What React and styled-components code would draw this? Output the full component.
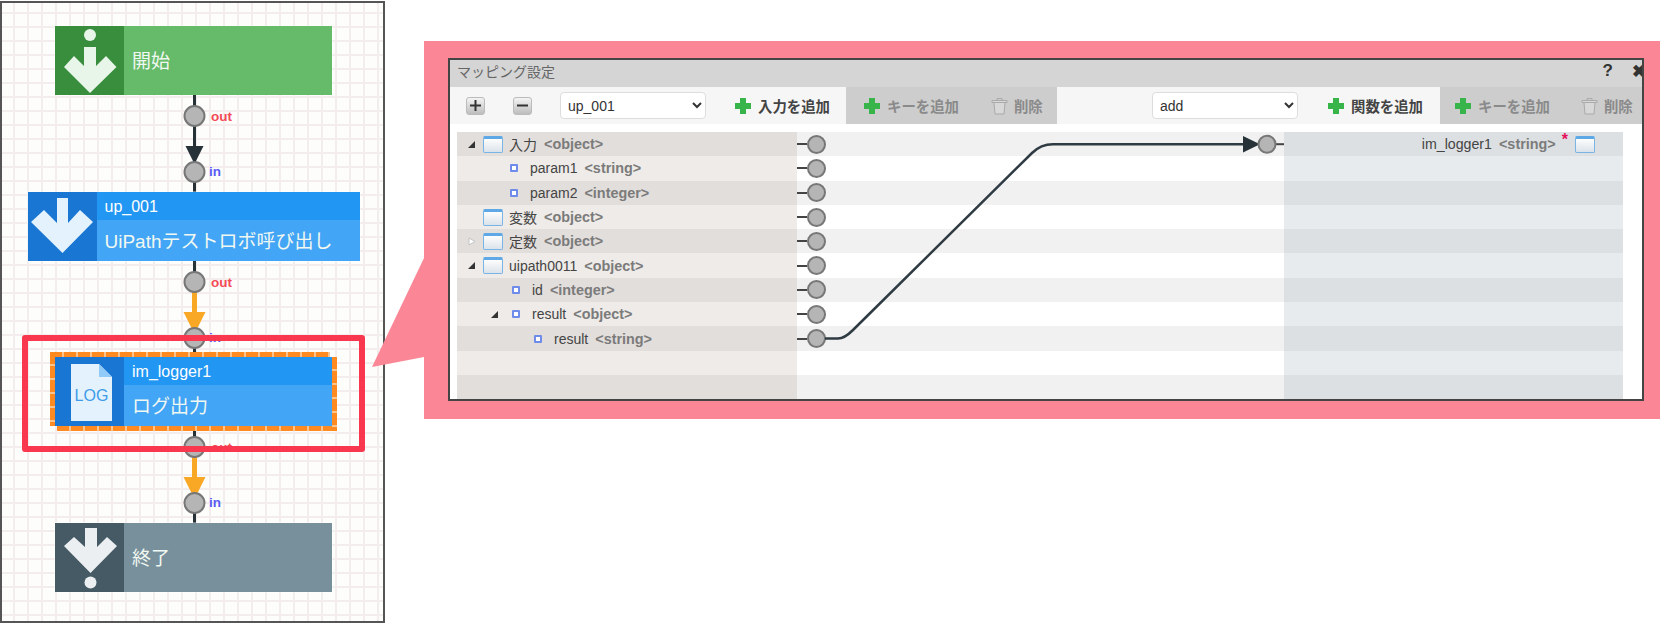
import React from 'react';
import styled, { createGlobalStyle, css } from 'styled-components';

const Global = createGlobalStyle`
    html, body { margin: 0; padding: 0; background: #fff; }
    * { box-sizing: border-box; }
    body { font-family: 'Liberation Sans', 'Noto Sans CJK JP', sans-serif; }
`;

// PAGE
const Page = styled.div`
    width: 1660px;
    height: 629px;
    display: flex;
    align-items: flex-start;
    overflow: hidden;
`;

// FLOW PANEL
const FlowPanel = styled.section`
    width: 385px;
    height: 622px;
    margin-top: 1px;
    padding: 23px 0 0 2px;
    flex: none;
    border: 2px solid #555;
    display: flex;
    flex-direction: column;
    align-items: center;
    background-color: #fdfdfc;
    background-image:
        linear-gradient(to right, #f3eded 2px, transparent 2px),
        linear-gradient(to bottom, #f3eded 2px, transparent 2px);
    background-size: 14px 14px;
    background-position: 11px 9px;
`;
const Node = styled.div`
    width: ${p => p.$width || 277}px;
    height: 69px;
    flex: none;
    display: flex;
    color: #fff;
    background: ${p => p.$body};
    box-shadow: 0 0 0 1px rgba(255, 255, 255, 0.35);
`;
const NodeIcon = styled.div`
    width: 69px;
    flex: none;
    background: ${p => p.$color};
    svg { display: block; }
`;
const NodeMain = styled.div`
    flex: 1;
    display: flex;
    flex-direction: column;
    justify-content: center;
`;
const NodeHead = styled.div`
    height: 28px;
    padding: 1px 0 0 8px;
    font-size: 16px;
    line-height: 27px;
    background: #2196f3;
`;
const NodeLabel = styled.div`
    flex: 1;
    display: flex;
    align-items: center;
    padding: 0 0 2px 8px;
    font-size: 19px;
    color: #f1f8f1;
`;
const Selected = styled.div`
    position: relative;
    flex: none;
`;
const Hatch = styled.span`
    position: absolute;
    ${p => (p.$side === 'top' || p.$side === 'bottom') && css`
        height: 5px;
        width: 280px;
        background: repeating-linear-gradient(to right, #ff8a22 0 12px, #ffc48c 12px 14px);
    `}
    ${p => (p.$side === 'left' || p.$side === 'right') && css`
        width: 5px;
        height: 74px;
        background: repeating-linear-gradient(to bottom, #ff8a22 0 12px, #ffc48c 12px 14px);
    `}
    ${p => p.$side === 'top' && 'left: -5px; top: -5px;'}
    ${p => p.$side === 'bottom' && 'left: 2px; top: 100%;'}
    ${p => p.$side === 'left' && 'left: -5px; top: -5px;'}
    ${p => p.$side === 'right' && 'left: 100%; top: 0;'}
`;
const RedFrame = styled.div`
    position: absolute;
    left: -33px;
    right: -33px;
    top: -22px;
    bottom: -26px;
    border: 6px solid #f9374f;
    border-radius: 3px;
`;
const LinkSvg = styled.svg`
    display: block;
    flex: none;
    font-family: 'Liberation Sans', sans-serif;
    font-size: 13.5px;
    font-weight: 700;
`;

// MAPPING DIALOG
const Callout = styled.section`
    position: relative;
    flex: 1;
    height: 378px;
    margin: 41px 0 0 39px;
    padding: 17px 16px 18px 24px;
    background: #fb8796;
`;
const CalloutTip = styled.svg`
    position: absolute;
    left: -52px;
    top: 1px;
`;
const Dialog = styled.div`
    height: 343px;
    border: 2px solid #444;
    background: #fff;
    display: flex;
    flex-direction: column;
    overflow: hidden;
`;
const TitleBar = styled.div`
    height: 27px;
    flex: none;
    padding: 0 0 5px 7px;
    display: flex;
    align-items: center;
    justify-content: space-between;
    background: #d5d5d5;
    color: #666;
    font-size: 14px;
`;
const TitleActions = styled.div`
    display: flex;
    align-items: center;
    gap: 19px;
    margin-right: -4px;
    color: #333;
    font-size: 17px;
    font-weight: 700;
`;
const Toolbar = styled.div`
    height: 38px;
    flex: none;
    display: flex;
    align-items: flex-start;
`;
const ToolGroup = styled.div`
    width: ${p => p.$width}px;
    height: 37px;
    padding-left: ${p => p.$pad}px;
    display: flex;
    align-items: center;
    gap: ${p => p.$gap}px;
    background: ${p => (p.$muted ? '#cdcdcd' : '#f6f6f6')};
`;
const TreeButton = styled.button`
    width: 19px;
    height: 18px;
    padding: 0;
    border: 1px solid #bbb;
    border-radius: 3px;
    display: flex;
    align-items: center;
    justify-content: center;
    background: linear-gradient(#f4f4f4, #bdbdbd);
`;
const Picker = styled.select`
    width: 146px;
    height: 27px;
    padding: 0 0 0 3px;
    border: 1px solid #ddd;
    border-radius: 4px;
    background: #fff;
    color: #333;
    font-family: 'Liberation Sans', sans-serif;
    font-size: 14px;
`;
const ToolItem = styled.div`
    display: flex;
    align-items: center;
    gap: 6px;
    font-size: 14.4px;
    font-weight: 700;
    color: ${p => (p.$muted ? '#8a8a8a' : '#444')};
`;
const Body = styled.div`
    position: relative;
    flex: 1;
    padding: 7px 19px 0 7px;
    display: grid;
    grid-auto-rows: 24.3px;
`;
const Row = styled.div`
    display: grid;
    grid-template-columns: 340px 487px 339px;
`;
const SourceCell = styled.div`
    display: flex;
    align-items: center;
    padding-left: ${p => p.$indent}px;
    background: ${p => (p.$even ? '#e2dedb' : '#eeebe8')};
    font-size: 14px;
    white-space: nowrap;
    color: #444;
`;
const MiddleCell = styled.div`
    display: flex;
    align-items: center;
    background: ${p => (p.$even ? '#f1f1f1' : '#fff')};
`;
const TargetCell = styled.div`
    display: flex;
    align-items: center;
    justify-content: flex-end;
    padding-right: 28px;
    background: ${p => (p.$even ? '#dde0e3' : '#e8ebee')};
    font-size: 14.2px;
    color: #444;
`;
const Twist = styled.svg`
    width: 8px;
    height: 9px;
    flex: none;
    margin-right: ${p => p.$after}px;
`;
const WindowIcon = styled.span`
    width: 20px;
    height: 17px;
    flex: none;
    border: 1px solid #78b4e6;
    border-top: 3px solid #5fa8e6;
    border-radius: 2px;
    background: linear-gradient(#fdfdfd, #dbe3ea);
`;
const Leaf = styled.span`
    width: 8px;
    height: 8px;
    flex: none;
    border: 2px solid #6f8cea;
    border-radius: 1px;
    background: #fff;
`;
const KeyName = styled.span`
    margin-left: ${p => p.$gap}px;
`;
const KeyType = styled.span`
    margin-left: 7px;
    color: #7b7b7b;
    font-size: 14.4px;
    font-weight: 700;
`;
const Required = styled.span`
    margin: -8px 7px 0 6px;
    color: #e5145a;
    font-size: 16px;
    font-weight: 700;
`;
const Stub = styled.span`
    width: 10px;
    height: 2px;
    flex: none;
    background: #444;
`;
const Port = styled.span`
    width: 19px;
    height: 19px;
    flex: none;
    border: 2px solid #777;
    border-radius: 50%;
    background: #b5b5b5;
`;
const Wires = styled.svg`
    position: absolute;
    left: 0;
    top: 0;
`;

const SOURCE_ROWS = [
    { indent: 11, twist: 'open', win: true, name: '入力', type: '<object>' },
    { indent: 53, name: 'param1', type: '<string>' },
    { indent: 53, name: 'param2', type: '<integer>' },
    { indent: 26, win: true, name: '変数', type: '<object>' },
    { indent: 11, twist: 'closed', win: true, name: '定数', type: '<object>' },
    { indent: 11, twist: 'open', win: true, name: 'uipath0011', type: '<object>' },
    { indent: 55, name: 'id', type: '<integer>' },
    { indent: 34, twist: 'open', name: 'result', type: '<object>' },
    { indent: 77, name: 'result', type: '<string>' },
    {},
    {},
];

const ARROWS = {
    start: 'M29 21H41V40L51 30L61.5 41L35 67L9 41L19 30L29 40Z',
    service: 'M29 6H40V31L52 18L65 30L34.5 61L3 30L16 18L29 31Z',
    end: 'M30 5H42V24L52 14L62 23L35.5 50L9 23L19 14L30 24Z',
};

const Twisty = ({ kind, after }) => (
    <Twist $after={after} viewBox="0 0 8 9">
        {kind === 'open'
            ? <path d="M0 8L7 1V8Z" fill="#333" />
            : <path d="M1 1L7 4.5L1 8Z" fill="#fff" stroke="#c4c4c4" />}
    </Twist>
);

const AddIcon = () => (
    <svg width="18" height="18" viewBox="0 0 18 18">
        <path d="M6 1H12V6H17V12H12V17H6V12H1V6H6Z" fill="#38b54a" />
    </svg>
);

const TrashIcon = () => (
    <svg width="17" height="18" viewBox="0 0 17 18" fill="#d8d8d8" stroke="#aaa">
        <path d="M1 3.5H16V5.5H1Z" />
        <path d="M6 3.5V1.5H11V3.5" fill="none" />
        <path d="M3 5.5H14L13 17H4Z" />
    </svg>
);

const FlowLink = ({ height, hot }) => (
    <LinkSvg width="381" height={height} viewBox={`0 0 381 ${height}`}>
        <path d={`M191.5 0V${height}`} stroke="#263238" strokeWidth="3" />
        {hot && <path d="M191.5 30V52" stroke="#f9a825" strokeWidth="5" />}
        {hot
            ? <path d="M180.5 51H202.5L191.5 73Z" fill="#f9a825" />
            : <path d="M182.5 51H200.5L191.5 69Z" fill="#263238" />}
        <circle cx="191.5" cy="21" r="10" fill="#b5b5b5" stroke="#777" strokeWidth="2" />
        <circle cx="191.5" cy="77" r="10" fill="#b5b5b5" stroke="#777" strokeWidth="2" />
        <text x="208" y="26" fill="#f44a55">out</text>
        <text x="206" y="81" fill="#5a5cf5">in</text>
    </LinkSvg>
);

const App = () => (
    <Page>
        <Global />
        <FlowPanel>
            <Node $body="#66bb6a">
                <NodeIcon $color="#388e3c">
                    <svg width="69" height="69" viewBox="0 0 69 69">
                        <circle cx="35" cy="9" r="6" fill="#e8f5e9" />
                        <path d={ARROWS.start} fill="#e8f5e9" />
                    </svg>
                </NodeIcon>
                <NodeMain><NodeLabel>開始</NodeLabel></NodeMain>
            </Node>
            <FlowLink height={97} />
            <Node $body="#42a5f5" $width={332}>
                <NodeIcon $color="#1976d2">
                    <svg width="69" height="69" viewBox="0 0 69 69">
                        <path d={ARROWS.service} fill="#e3f2fd" />
                    </svg>
                </NodeIcon>
                <NodeMain>
                    <NodeHead>up_001</NodeHead>
                    <NodeLabel>UiPathテストロボ呼び出し</NodeLabel>
                </NodeMain>
            </Node>
            <FlowLink height={96} hot />
            <Selected>
                <Hatch $side="top" />
                <Hatch $side="bottom" />
                <Hatch $side="left" />
                <Hatch $side="right" />
                <Node $body="#42a5f5">
                    <NodeIcon $color="#1976d2">
                        <svg width="69" height="69" viewBox="0 0 69 69">
                            <path d="M16 7H44L57 20V64H16Z" fill="#e3f2fd" />
                            <path d="M44 7L57 20H44Z" fill="#90caf9" />
                            <text x="36.5" y="44" textAnchor="middle" fontSize="16" fill="#3d9be9" fontFamily="Liberation Sans, sans-serif">LOG</text>
                        </svg>
                    </NodeIcon>
                    <NodeMain>
                        <NodeHead>im_logger1</NodeHead>
                        <NodeLabel>ログ出力</NodeLabel>
                    </NodeMain>
                </Node>
                <RedFrame />
            </Selected>
            <FlowLink height={97} hot />
            <Node $body="#78909c">
                <NodeIcon $color="#455a64">
                    <svg width="69" height="69" viewBox="0 0 69 69">
                        <path d={ARROWS.end} fill="#eceff1" />
                        <circle cx="35.5" cy="59.5" r="6" fill="#eceff1" />
                    </svg>
                </NodeIcon>
                <NodeMain><NodeLabel>終了</NodeLabel></NodeMain>
            </Node>
        </FlowPanel>

        <Callout>
            <CalloutTip width="52" height="377" viewBox="0 0 52 377">
                <path d="M52 216L0 325L52 315Z" fill="#fb8796" />
            </CalloutTip>
            <Dialog>
                <TitleBar>
                    マッピング設定
                    <TitleActions><span>?</span><span>✖</span></TitleActions>
                </TitleBar>
                <Toolbar>
                    <ToolGroup $width={396} $pad={16} $gap={28}>
                        <TreeButton aria-label="expand">
                            <svg width="11" height="11" viewBox="0 0 11 11"><path d="M4.5 0H6.5V4.5H11V6.5H6.5V11H4.5V6.5H0V4.5H4.5Z" fill="#333" /></svg>
                        </TreeButton>
                        <TreeButton aria-label="collapse">
                            <svg width="11" height="11" viewBox="0 0 11 11"><path d="M0 4.5H11V6.5H0Z" fill="#333" /></svg>
                        </TreeButton>
                        <Picker defaultValue="up_001"><option>up_001</option></Picker>
                        <ToolItem><AddIcon />入力を追加</ToolItem>
                    </ToolGroup>
                    <ToolGroup $width={211} $pad={17} $gap={32} $muted>
                        <ToolItem $muted><AddIcon />キーを追加</ToolItem>
                        <ToolItem $muted><TrashIcon />削除</ToolItem>
                    </ToolGroup>
                    <ToolGroup $width={383} $pad={95} $gap={29}>
                        <Picker defaultValue="add"><option>add</option></Picker>
                        <ToolItem><AddIcon />関数を追加</ToolItem>
                    </ToolGroup>
                    <ToolGroup $width={202} $pad={14} $gap={31} $muted>
                        <ToolItem $muted><AddIcon />キーを追加</ToolItem>
                        <ToolItem $muted><TrashIcon />削除</ToolItem>
                    </ToolGroup>
                </Toolbar>
                <Body>
                    {SOURCE_ROWS.map((row, i) => (
                        <Row key={i}>
                            <SourceCell $even={i % 2 === 0} $indent={row.indent || 0}>
                                {row.twist && <Twisty kind={row.twist} after={row.win ? 7 : 13} />}
                                {row.win && <WindowIcon />}
                                {row.name && !row.win && <Leaf />}
                                {row.name && <KeyName $gap={row.win ? 6 : 12}>{row.name}</KeyName>}
                                {row.type && <KeyType>{row.type}</KeyType>}
                            </SourceCell>
                            <MiddleCell $even={i % 2 === 0}>
                                {row.name && <><Stub /><Port /></>}
                            </MiddleCell>
                            <TargetCell $even={i % 2 === 0}>
                                {i === 0 && (
                                    <>
                                        im_logger1
                                        <KeyType>{'<string>'}</KeyType>
                                        <Required>*</Required>
                                        <WindowIcon />
                                    </>
                                )}
                            </TargetCell>
                        </Row>
                    ))}
                    <Wires width="1192" height="274" viewBox="0 0 1192 274">
                        <path d="M375 213.5H388C394 213.5 399 209 403 205L582 28C588 22 594 19.2 603 19.2H796" fill="none" stroke="#2f3b42" strokeWidth="2.5" />
                        <path d="M793 11L810 19.2L793 27.5Z" fill="#263238" />
                        <path d="M815 19.2H834" stroke="#444" strokeWidth="2" />
                        <circle cx="817" cy="19.2" r="8.5" fill="#b5b5b5" stroke="#777" strokeWidth="2" />
                    </Wires>
                </Body>
            </Dialog>
        </Callout>
    </Page>
);

export default App;
